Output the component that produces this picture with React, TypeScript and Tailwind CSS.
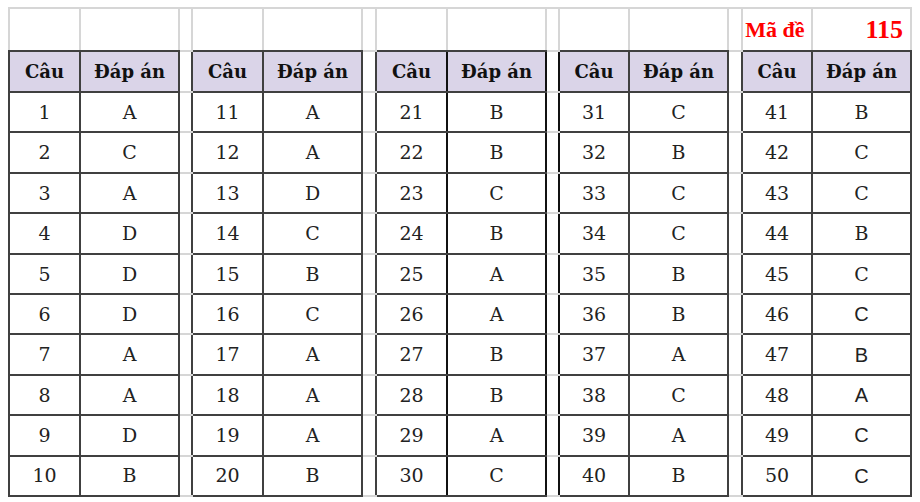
import React from 'react'

const answers = 'ACADDDAADB' + 'AADCBCAAAB' + 'BBCBAABBAC' + 'CBCCBBACAB' + 'BCCBCCBACC'

const widths = ['w-[71px]', 'w-[99px]', 'w-[13px]', 'w-[71px]', 'w-[99px]', 'w-[14px]', 'w-[71px]', 'w-[99px]', 'w-[13px]', 'w-[70px]', 'w-[99px]', 'w-[14px]', 'w-[70px]', 'w-[99px]']

const isBlockCol = (c: number) => c >= 0 && c < 14 && c % 3 !== 2
const isBlock = (r: number, c: number) => r >= 1 && r <= 11 && isBlockCol(c)

// colour of the line on each side of a cell, dark where a block touches it
const vEdge = (r: number, c: number) => {
  // edge on the left of column c
  if ((c === 7 || c === 8 || c === 9) && r >= 1) return 'black'
  return isBlock(r, c - 1) || isBlock(r, c) ? 'dark' : 'gray'
}
const hEdge = (r: number, c: number) => (isBlock(r - 1, c) || isBlock(r, c) ? 'dark' : 'gray')

const lCls = { dark: 'border-l-2 border-l-[#404040]', black: 'border-l-2 border-l-[#111111]', gray: 'border-l-2 border-l-[#d6d6d6]' }
const rCls = { dark: 'border-r-2 border-r-[#404040]', black: 'border-r-2 border-r-[#111111]', gray: 'border-r-2 border-r-[#d6d6d6]' }
const tCls = { dark: 'border-t-2 border-t-[#404040]', black: 'border-t-2 border-t-[#111111]', gray: 'border-t-2 border-t-[#d6d6d6]' }
const bCls = { dark: 'border-b-2 border-b-[#404040]', black: 'border-b-2 border-b-[#111111]', gray: 'border-b-2 border-b-[#d6d6d6]' }

const Cell: React.FC<{ r: number; c: number; className?: string; children?: React.ReactNode }> = ({ r, c, className = '', children }) => (
  <td
    className={`${lCls[vEdge(r, c)]} ${rCls[vEdge(r, c + 1)]} ${tCls[hEdge(r, c)]} ${bCls[hEdge(r + 1, c)]} p-0 ${className}`}
  >
    {children}
  </td>
)

const cols = Array.from({ length: 14 }, (_, i) => i)

export default function App() {
  return (
    <div className="w-[920px] h-[502px] bg-white overflow-hidden pt-[7px] pl-[8px]">
      <table className="w-[902px] table-fixed border-collapse">
        <colgroup>
          {widths.map((w, i) => (
            <col key={i} className={w} />
          ))}
        </colgroup>
        <tbody>
          <tr className="h-[43px]">
            {cols.map((c) =>
              c === 12 ? (
                <Cell key={c} r={0} c={c} className="text-center pr-[4px] font-['Liberation_Serif',serif] font-bold text-[22px] text-[#ff0000]">
                  Mã đề
                </Cell>
              ) : c === 13 ? (
                <Cell key={c} r={0} c={c} className="text-right pr-[7px] font-['Liberation_Serif',serif] font-bold text-[26px] text-[#ff0000]">
                  115
                </Cell>
              ) : (
                <Cell key={c} r={0} c={c} />
              )
            )}
          </tr>
          <tr className="h-[41px]">
            {cols.map((c) =>
              isBlockCol(c) ? (
                <Cell key={c} r={1} c={c} className="bg-[#dad4e8] text-center font-['DejaVu_Serif',serif] font-bold text-[18px] text-[#111111]">
                  {c % 3 === 0 ? 'Câu' : 'Đáp án'}
                </Cell>
              ) : (
                <Cell key={c} r={1} c={c} />
              )
            )}
          </tr>
          {Array.from({ length: 10 }, (_, i) => (
            <tr key={i} className="h-[40.4px]">
              {cols.map((c) => {
                if (!isBlockCol(c)) return <Cell key={c} r={i + 2} c={c} />
                const block = Math.floor(c / 3)
                const n = block * 10 + i + 1
                const sans = n >= 46
                return (
                  <Cell
                    key={c}
                    r={i + 2}
                    c={c}
                    className={`text-center text-[#222222] ${
                      c % 3 === 1 && sans ? "font-['Liberation_Sans',sans-serif] text-[20px]" : "font-['DejaVu_Serif',serif] text-[19px]"
                    }`}
                  >
                    {c % 3 === 0 ? n : answers[n - 1]}
                  </Cell>
                )
              })}
            </tr>
          ))}
        </tbody>
      </table>
    </div>
  )
}
